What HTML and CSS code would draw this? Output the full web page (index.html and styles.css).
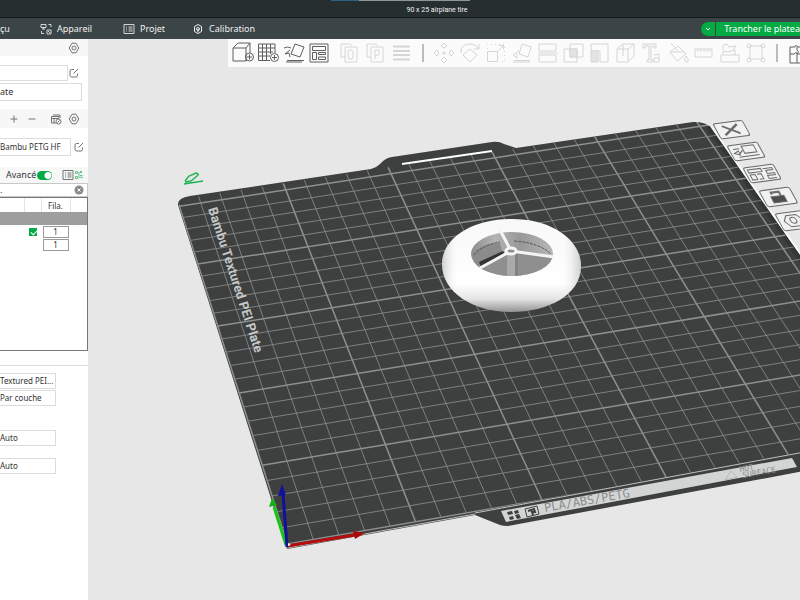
FILE: index.html
```html
<!DOCTYPE html>
<html lang="fr">
<head>
<meta charset="utf-8">
<title>90 x 25 airplane tire</title>
<link rel="stylesheet" href="styles.css">
</head>
<body>
<svg class="defs" aria-hidden="true">
  <symbol id="gear" viewBox="0 0 12 12"><path d="M4 1.200h4L10.800 6 8 10.800H4L1.200 6z"/><circle cx="6" cy="6" r="2"/></symbol>
  <symbol id="edit" viewBox="0 0 12 12"><path d="M6 2.500H3.500q-1.500 0-1.500 1.500v4.500q0 1.500 1.500 1.500h4.500q1.500 0 1.500-1.500V6.500M5.500 6.500 10 2"/></symbol>
</svg>
<header class="titlebar"><span class="strip"></span><h1>90 x 25 airplane tire</h1></header>
<nav class="tabs">
  <a class="tab first" href="#">çu</a>
  <a class="tab device" href="#"><svg width="12" height="12" viewBox="0 0 12 12"><path d="M1 1.500h5v3H1zM3.500 4.500V6M2 6h3M8.500 1.500H11V4M1.500 8v2.500H4M7 7h4v4H7zM8 8l2 2"/></svg>Appareil</a>
  <a class="tab project" href="#"><svg width="12" height="12" viewBox="0 0 12 12"><path d="M1 1.500h10v9H1zM3 4h1M5.500 4h4M3 6h1M5.500 6h4M3 8h1M5.500 8h4"/></svg>Projet</a>
  <a class="tab calib" href="#"><svg width="12" height="12" viewBox="0 0 12 12"><path d="M6 1.500 9.500 3.500v5L6 10.500 2.500 8.500v-5z"/><circle cx="6" cy="6" r="1.500"/><path d="M6 6v3"/></svg>Calibration</a>
  <div class="slice">
    <button class="more" aria-label="Options de tranchage"><svg width="8" height="8" viewBox="0 0 8 8"><path d="M2 3l2 2 2-2"/></svg></button>
    <button class="go">Trancher le platea</button>
  </div>
</nav>
<div class="work">
<aside class="side">
  <div class="head"><button aria-label="Paramètres imprimante"><svg width="12" height="12"><use href="#gear"/></svg></button></div>
  <div class="printer">
    <div class="line"><input class="field short" aria-label="Imprimante"><button aria-label="Modifier"><svg width="12" height="12"><use href="#edit"/></svg></button></div>
    <select class="field plate" aria-label="Plateau"><option>ate</option></select>
  </div>
  <div class="head filament">
    <button class="cut" aria-label="Purge"><svg width="4" height="12" viewBox="0 0 4 12"><path d="M0 3q2 3 0 6"/></svg></button>
    <button aria-label="Ajouter"><svg width="12" height="12" viewBox="0 0 12 12"><path d="M6 2.500v7M2.500 6h7"/></svg></button>
    <button aria-label="Retirer"><svg width="12" height="12" viewBox="0 0 12 12"><path d="M2.500 6h7"/></svg></button>
    <button class="sync" aria-label="Synchroniser"><svg width="12" height="12" viewBox="0 0 12 12"><path d="M6 10H1.500V3.500H9V5M1.500 5.500H9M3 2h7v3M4 5.500V10"/><circle cx="8.500" cy="8.500" r="2.500"/><path d="M7.500 9.500l2-2"/></svg></button>
    <button aria-label="Paramètres filament"><svg width="12" height="12"><use href="#gear"/></svg></button>
  </div>
  <div class="line spool"><select class="field" aria-label="Filament"><option>Bambu PETG HF</option></select><button aria-label="Modifier le filament"><svg width="12" height="12"><use href="#edit"/></svg></button></div>
  <div class="mode"><label for="adv">Avancé</label><input id="adv" class="toggle" type="checkbox" checked>
    <button class="list" aria-label="Liste"><svg width="12" height="12" viewBox="0 0 12 12"><path d="M1 1.500h10v9H1zM3 4h1M5.500 4h4M3 6h1M5.500 6h4M3 8h1M5.500 8h4"/></svg></button>
    <button class="tree" aria-label="Objets"><svg width="8" height="10" viewBox="0 0 8 10"><path d="M.5 1.500h2v2h-2zM5 1l2 2M7 1 5 3M.5 6.500h2v2h-2zM4 2v6.500M5 5.500h2.500M5 8l1.500-1.500 1 2"/></svg></button>
  </div>
  <div class="search"><input aria-label="Rechercher" value="."><button aria-label="Effacer"><svg width="10" height="10" viewBox="0 0 10 10"><circle cx="5" cy="5" r="4.500" fill="#8a8a8a" stroke="none"/><path d="M3.500 3.500l3 3M6.500 3.500l-3 3" stroke="#fff"/></svg></button></div>
  <div class="objects">
    <table>
      <thead><tr><th class="c1"></th><th class="c2"></th><th class="c3">Fila.</th><th></th></tr></thead>
      <tbody>
        <tr class="sel"><td colspan="4"></td></tr>
        <tr><td></td><td><input class="tick" type="checkbox" checked aria-label="Imprimable"></td><td><input class="num" value="1" aria-label="Filament objet"></td><td></td></tr>
        <tr><td></td><td></td><td><input class="num" value="1" aria-label="Filament pièce"></td><td></td></tr>
      </tbody>
    </table>
  </div>
  <div class="settings">
    <select class="field" aria-label="Type de plateau"><option>Textured PEI...</option></select>
    <select class="field" aria-label="Séquence"><option>Par couche</option></select>
    <select class="field gap" aria-label="Première couche"><option>Auto</option></select>
    <select class="field mid" aria-label="Autres couches"><option>Auto</option></select>
  </div>
</aside>
<main class="view">
  <svg class="scene" viewBox="88 39 712 561" preserveAspectRatio="xMinYMin slice" role="img" aria-label="Plateau">
    <defs>
      <linearGradient id="body" x1="0" y1="0" x2="0" y2="1"><stop offset="0" stop-color="#f8f8f8"/><stop offset=".7" stop-color="#fff"/><stop offset=".86" stop-color="#e4e4e4"/><stop offset="1" stop-color="#929292"/></linearGradient>
      <linearGradient id="side" x1="0" y1="0" x2="1" y2="0"><stop offset="0" stop-color="#777" stop-opacity=".35"/><stop offset=".12" stop-color="#fff" stop-opacity="0"/><stop offset=".85" stop-color="#fff" stop-opacity="0"/><stop offset="1" stop-color="#777" stop-opacity=".35"/></linearGradient>
      <linearGradient id="wall" x1="0" y1="0" x2="1" y2="0"><stop offset="0" stop-color="#8c8c8c"/><stop offset=".3" stop-color="#b4b4b4"/><stop offset=".6" stop-color="#989898"/><stop offset="1" stop-color="#b8b8b8"/></linearGradient>
      <clipPath id="hole"><ellipse cx="512" cy="254" rx="41" ry="22"/></clipPath>
      <clipPath id="sheet"><path d="M179 207 Q177 200 190 196L695 122Q707 121 712 130L900 400 800 452 287 547z"/></clipPath>
    </defs>
    <path fill="#3e4040" d="M287 549 178 205Q177 198 190 196L371 169Q376 168 380 164 385 158 392 157L492 142Q499 141 504 144L516 148 693 122Q706 121 712 129L810 269V470L508 526Q503 526 500 525L475 515z"/>
    <path d="M711 127 811 269" stroke="#fff" stroke-width="2"/>
    <path d="M708 127 810 273" stroke="#333636" stroke-width="4"/>
    <g id="grid" clip-path="url(#sheet)" stroke="#8e9090"></g>
    <path d="M402 164 492 151" stroke="#fff" stroke-width="2"/>
    <text class="brand" transform="translate(208 209) rotate(72)">Bambu Textured PEI Plate</text>
    <path d="M475 513 810 451M287 548 475 514" stroke="#bfc1c1" stroke-width="1" fill="none"/>
    <path d="M501 511 792 458 797 467 506 522Z" fill="#d3d5d5"/>
    <g fill="#3e4040"><path d="M507 512l5-1 1 3-5 1zM514 511l4-1 1 3-4 1zM509 517l4-1 1 3-4 1zM515 515l4-1 2 4-4 1z"/><path d="M525 509 537 506 539 514 527 517z" fill="none" stroke="#3e4040"/><path d="M528 511l6-2 1 3-3 0 1 3" fill="none" stroke="#3e4040" stroke-width="2"/></g>
    <text class="pla" transform="translate(545 512) rotate(-10)">PLA/ABS/PETG</text>
    <path d="M725 480 731 471 737 477z" fill="none" stroke="#b5b8b8"/>
    <text class="hot" transform="translate(740 472) rotate(-10)">HOT</text>
    <text class="hot" transform="translate(743 478) rotate(-10)">SURFACE</text>
    <g class="platebtn">
      <g transform="matrix(1 -.13 .55 1 713 124)"><rect width="29" height="15" rx="2"/><path d="M7 3 21 12M22 3 6 12" stroke-width="2"/></g>
      <g transform="matrix(1 -.13 .55 1 727 146)"><rect width="30" height="15" rx="2"/><path d="M13 2h12v7H13zM4 4h6M3 8l5-2v4zM8 9l4-3M6 12h20"/></g>
      <g transform="matrix(1 -.13 .55 1 743 168)"><rect width="30" height="15" rx="2"/><path d="M3 2.500h13v3H3zM3 7.500h5v5H3zM10 7.500h4v5h-4M18 3h9v2h-7v3h7v2h-8v3h8"/></g>
      <g transform="matrix(1 -.13 .55 1 759 191)"><rect width="30" height="16" rx="2"/><path d="M8 7h13v6H8z" fill="#4c4e4e"/><path d="M18 7V3h-8v2" stroke-width="2"/></g>
      <g transform="matrix(1 -.13 .55 1 775 214)"><rect width="30" height="17" rx="2"/><path d="M9 3h10l4 5-4 6H9L5 8z"/><circle cx="14" cy="8" r="3"/></g>
    </g>
    <path d="M185 181 189 176 196 173Q200 174 197 176L191 181 185 182M184 184 203 181" fill="none" stroke="#21b455" stroke-width="1.500"/>
    <g>
      <path fill="url(#body)" d="M442 264C442 238 472 219 512 219S581 240 581 266C581 295 548 312 511 312S442 293 442 264z"/>
      <path fill="url(#side)" d="M442 264C442 238 472 219 512 219S581 240 581 266C581 295 548 312 511 312S442 293 442 264z"/>
      <g clip-path="url(#hole)">
        <path fill="url(#wall)" d="M470 230h84v50h-84z"/>
        <path d="M472 254Q480 244 500 243L505 262 480 275z" fill="#8b8b8b"/>
        <path d="M479 262l24-11 2 3-24 13z" fill="#333"/>
        <path d="M480 269 511 252 554 258 548 280H480z" fill="#8f8f8f"/>
        <path d="M507 254h10v24h-10z" fill="#aaa"/><path d="M515 254h3v24h-3z" fill="#828282"/>
        <path d="M474 255Q482 245 500 242M514 241Q540 243 551 254" fill="none" stroke="#555" stroke-dasharray="3 1"/>
      </g>
      <path d="M511 251 500 230M511 251 554 257M511 251 480 268" stroke="#f4f4f4" stroke-width="3"/>
      <ellipse cx="511" cy="251" rx="5" ry="3" fill="#8f8f8f" stroke="#f6f6f6" stroke-width="3"/>
    </g>
    <g stroke-width="3"><path d="M287 546 355 535" stroke="#b50c0c"/><path d="M353 531 365 533 355 539z" fill="#a80c0c"/><path d="M286 545 274 507" stroke="#15c815"/><path d="M269 507 272 498 277 505z" fill="#15b015"/><path d="M287 547 283 494" stroke="#10109a"/><path d="M278 496 282 484 286 495z" fill="#10109a"/><path d="M288 543l3 2-3 1z" fill="#fff"/></g>
  </svg>
  <div class="tools">
    <button aria-label="Ajouter"><svg viewBox="0 0 26 28"><path d="M3 9h13v13H3zM3 9l5-5h12l-4 5M20 4v10M16 22l1-1"/><circle cx="19.500" cy="18" r="4"/><path d="M17 18h5M19.500 15.500v5"/></svg></button>
    <button aria-label="Ajouter un plateau"><svg viewBox="0 0 26 28"><path d="M14 21.500H2.500V5H19v9M2.500 9H19M2.500 13H17M2.500 17H14M6.500 5v16.500M10.500 5v16.500M14.500 5v10"/><circle cx="18.500" cy="18.500" r="4"/><path d="M16 18.500h5M18.500 16v5"/></svg></button>
    <button aria-label="Orienter"><svg viewBox="0 0 26 28"><path d="M9 15 13 5 22 8 18 18zM2 9q4-2 7 0M3 15l4-1 1 4M3 15l5-4M5 21.500h17M4 23h16"/></svg></button>
    <button aria-label="Organiser"><svg viewBox="0 0 26 28"><path d="M2 5h18v18H2zM4.500 7.500h13v4h-13zM4.500 13.500h4v7h-4zM10.500 13.500h7v2h-7zM10.500 18h7v2.500h-7z"/></svg></button>
    <span class="space"></span>
    <button class="off" aria-label="Objets"><svg viewBox="0 0 26 28"><path d="M8 18H4V5h9l2 2M8 8h12v15H8zM12 11h3l1 2v5l-1 2h-3l-1-2v-5z"/></svg></button>
    <button class="off" aria-label="Pièces"><svg viewBox="0 0 26 28"><path d="M8 18H4V5h9l2 2M8 8h12v15H8zM12 20v-9h4v5h-4"/></svg></button>
    <button class="off" aria-label="Hauteur de couche"><svg viewBox="0 0 26 28"><path d="M4 7.500h17M4 12h17M4 16h17M4 20.500h17" stroke-width="2"/></svg></button>
    <span class="bar"></span>
    <button class="off" aria-label="Déplacer"><svg viewBox="0 0 26 28"><path d="M13 4l3 3-3 2-3-2zM13 18l3 3-3 3-3-3zM3 14l3-3 2 3-2 3zM23 14l-3-3-2 3 2 3zM13 12v4M11 14h4"/></svg></button>
    <button class="off" aria-label="Pivoter"><svg viewBox="0 0 26 28"><path d="M13 10l7 6-7 7-7-7zM4 14Q3 5 13 5q6 0 8 4M17 10h5V5"/></svg></button>
    <button class="off" aria-label="Échelle"><svg viewBox="0 0 26 28"><path d="M4.500 12.500h10v10h-10zM14 13l6-6M16 6.500h4.500v4"/><path d="M4.500 10V5.500h17v17H16" stroke-dasharray="1 3"/></svg></button>
    <button class="off" aria-label="Poser"><svg viewBox="0 0 26 28"><path d="M10 15 13 5 22 8 19 18zM4 16l6-4M4 16l4 3v-4M5 21.500h16M4 23h17"/></svg></button>
    <button class="off" aria-label="Couper"><svg viewBox="0 0 26 28"><path d="M4 12V5h17v7zM4 16h17v7H4zM3 14h20"/></svg></button>
    <button class="off" aria-label="Booléen"><svg viewBox="0 0 26 28"><path d="M3 10h13v13H3zM9 5h13v13H9z"/><path class="shade" d="M9 10h7v8H9z"/></svg></button>
    <button class="off" aria-label="Supports"><svg viewBox="0 0 26 28"><path d="M4 5h17v18h-8V12H4z"/><path class="shade" d="M4 12h7v11H4z"/></svg></button>
    <button class="off" aria-label="Couture"><svg viewBox="0 0 26 28"><path d="M4 10h11v13H4zM4 10l6-5h11l-6 5M21 5v12l-6 6M10 5v12"/></svg></button>
    <button class="off" aria-label="Texte"><svg viewBox="0 0 26 28"><path d="M4 5h13v4h-2V7h-3v14h2v2H8v-2h2V7H6v2H4zM15 16l5-1v8h-5v-4h5"/></svg></button>
    <button class="off" aria-label="Peindre"><svg viewBox="0 0 26 28"><path d="M5 13 13 7l8 8-9 7zM6 4l7 8M5 13h14M21 17q4 5 1 6-4 0-1-6"/></svg></button>
    <button class="off" aria-label="Mesurer"><svg viewBox="0 0 26 28"><path d="M4 10h17v8H4zM7 10v3M10 10v3M13 10v3M16 10v3M19 10v3"/></svg></button>
    <button class="off" aria-label="Assembler"><svg viewBox="0 0 26 28"><path d="M4 16h18v7H4zM6 16v-4l5 1 7-2v5M6 11V6l4-1 2 3 7-1-3 4"/></svg></button>
    <button class="off" aria-label="Simplifier"><svg viewBox="0 0 26 28"><path d="M7 7h12v13H7z"/><circle cx="6" cy="7" r="2"/><circle cx="20" cy="7" r="2"/><circle cx="6" cy="21" r="2"/><circle cx="20" cy="21" r="2"/></svg></button>
    <span class="bar"></span>
    <button aria-label="Vue assemblage"><svg viewBox="0 0 26 28"><path d="M5 8h5q0-3 3 0h6v16H5zM5 15h4q3-3 3 0h8M12 8v3q3 2 0 4v9"/></svg></button>
  </div>
</main>
</div>
<script src="grid.js"></script>
</body>
</html>
```
FILE: styles.css
```css
* { box-sizing: border-box; }
body { margin: 0; height: 100vh; display: flex; flex-direction: column; overflow: hidden; font: 9px/12px "Noto Sans", sans-serif; color: #3a3d3e; }
button { border: 0; padding: 0; margin: 0; background: none; font: inherit; color: inherit; display: flex; align-items: center; justify-content: center; flex: none; }
input, select { font: inherit; color: inherit; margin: 0; outline: 0; }
svg { fill: none; stroke: currentColor; stroke-width: 1; display: block; flex: none; }
.defs { display: none; }
.titlebar { flex: none; height: 18px; background: #262e30; border-bottom: 1px solid #12191c; color: #f2f2f2; display: flex; flex-direction: column; align-items: center; }
.titlebar h1 { margin: 3px 0 0; padding-left: 74px; font: 7px/12px Roboto, sans-serif; }
.strip { width: 139px; height: 1px; flex: none; background: linear-gradient(90deg, #2e6284 20%, #8b9899 20%); }
.tabs { flex: none; height: 21px; background: #3b4446; color: #f0f0f0; display: flex; align-items: center; overflow: hidden; }
.tab { color: inherit; text-decoration: none; display: flex; align-items: center; gap: 5px; flex: none; }
.first { width: 40px; }
.device { width: 83px; }
.project { width: 69px; }
.project svg, .device svg { color: #d4d8d8; }
.slice { margin-left: auto; display: flex; height: 14px; color: #fff; flex: none; gap: 1px; }
.slice button { background: #04ab45; }
.slice .more { width: 14px; border-radius: 7px 0 0 7px; }
.slice .go { padding-left: 8px; }
.work { flex: 1; min-height: 0; display: flex; }
.side { flex: none; width: 11%; min-width: 88px; background: #fff; color: #333; overflow: hidden; }
.side svg { color: #707475; }
.head { height: 17px; background: #f7f7f7; display: flex; align-items: center; justify-content: flex-end; padding-right: 8px; }
.field { display: block; appearance: none; border: 1px solid #dcdcdc; border-left: 0; border-radius: 0; background: #fff; padding: 0; height: 16px; min-width: 0; }
.printer { padding: 9px 6px 8px 0; display: flex; flex-direction: column; gap: 2px; }
.line { display: flex; align-items: center; }
.line .short { width: 68px; }
.printer .plate { height: 18px; }
.filament { height: 19px; gap: 6px; }
.cut { margin-right: auto; }
.sync { margin-left: 6px; }
.spool { padding: 10px 0 11px; font-size: 8px; }
.spool .field { width: 71px; height: 18px; }
.spool button { margin-left: 2px; }
.mode { height: 16px; background: #f7f7f7; display: flex; align-items: center; padding-left: 6px; gap: 1px; }
.toggle { appearance: none; width: 15px; height: 9px; border-radius: 5px; background: radial-gradient(circle at 11px 50%, #fff 3px, #04ab45 4px); flex: none; }
.mode .list { margin-left: 9px; }
.mode .tree svg { color: #5fc48a; }
.search { height: 14px; border: 1px solid #c8c8c8; border-left: 0; display: flex; align-items: center; padding-right: 3px; }
.search input { flex: 1; min-width: 0; border: 0; padding: 0; background: none; height: 12px; }
.objects { height: 154px; border: 1px solid #777; border-left: 0; }
table { width: 100%; border-collapse: collapse; table-layout: fixed; }
th, td { padding: 0; height: 13px; line-height: 11px; }
th { height: 14px; font-weight: 400; font-size: 8px; border-right: 1px solid #e4e4e4; }
th:last-child { border: 0; }
.c1 { width: 24px; } .c2 { width: 17px; } .c3 { width: 29px; }
.sel { background: #9e9e9e; }
.num { display: block; width: 26px; height: 12px; margin: 0 auto; padding: 0; border: 1px solid #999; text-align: center; font-size: 8px; }
.tick { appearance: none; display: block; width: 8px; height: 8px; margin: 0 auto; background: #04ab45; }
.tick::after { content: ""; display: block; width: 5px; height: 3px; margin: 2px; border: solid #fff; border-width: 0 0 1px 1px; transform: rotate(-45deg); }
.settings { margin-top: 14px; border-top: 1px solid #ddd; padding-top: 7px; font-size: 8px; }
.settings .field { width: 56px; margin-bottom: 1px; }
.settings .gap { margin-top: 24px; }
.settings .mid { margin-top: 12px; }
.view { flex: 1; min-width: 0; position: relative; background: #e7e7e7; overflow: hidden; }
.scene { width: 100%; height: 100%; stroke: none; }
.brand { font: 700 13px Roboto, sans-serif; fill: #c6c8c8; }
.pla { font: 12px "DejaVu Sans Mono", monospace; fill: #8a8d8d; }
.hot { font: 8px "DejaVu Sans Mono", monospace; fill: #8a8d8d; }
.platebtn { fill: none; stroke: #6b6d6d; }
.platebtn rect { fill: #f1f1f1; }
.tools { position: absolute; top: 0; left: 140px; right: 0; height: 28px; padding-left: 2px; background: #fbfbfb; display: flex; align-items: center; overflow: hidden; color: #5c6061; }
.tools button { width: 26px; height: 28px; }
.tools svg { width: 26px; height: 28px; }
.tools .off { color: #d4d6d6; }
.shade { fill: #e2e3e3; }
.space { width: 3px; flex: none; }
.bar { width: 2px; height: 18px; margin: 0 7px; background: #bbb; flex: none; }
```
FILE: grid.js
```javascript
// Perspective grid of the build plate: 10 mm cells, heavier line every 50 mm.
// Camera samples: plate x, plate y (mm), view x, view y (px).
const samples = [
  [0, 0, 287, 547], [50, 0, 416, 523], [100, 0, 543, 499], [150, 0, 667, 477], [200, 0, 787, 455],
  [0, 150, 219, 326], [50, 150, 330, 308], [100, 150, 444, 289], [200, 150, 664, 255], [250, 150, 780, 237],
  [0, 200, 198, 263], [50, 200, 308, 247], [100, 200, 417, 228], [200, 200, 629, 197], [250, 200, 742, 181],
  [0, 250, 179, 207], [50, 250, 287, 190], [100, 250, 393, 173], [200, 250, 595, 138], [250, 250, 696, 130]
];
const MM = 250;
const PX = 500;

// Least-squares homography by normal equations and Gauss-Jordan elimination.
function fit(points) {
  const m = Array.from({ length: 8 }, () => new Array(9).fill(0));
  for (const [px, py, pu, pv] of points) {
    const x = px / MM, y = py / MM, u = pu / PX, v = pv / PX;
    for (const r of [[x, y, 1, 0, 0, 0, -u * x, -u * y, u], [0, 0, 0, x, y, 1, -v * x, -v * y, v]]) {
      for (let i = 0; i < 8; i++) for (let j = 0; j < 9; j++) m[i][j] += r[i] * r[j];
    }
  }
  for (let i = 0; i < 8; i++) {
    for (let r = 0; r < 8; r++) {
      if (r === i) continue;
      const f = m[r][i] / m[i][i];
      for (let c = i; c < 9; c++) m[r][c] -= f * m[i][c];
    }
  }
  return m.map((row, i) => row[8] / row[i]);
}
const h = fit(samples);

function project(px, py) {
  const x = px / MM, y = py / MM;
  const w = (h[6] * x + h[7] * y + 1) / PX;
  return [(h[0] * x + h[1] * y + h[2]) / w, (h[3] * x + h[4] * y + h[5]) / w];
}

const grid = document.getElementById("grid");
function rule(x1, y1, x2, y2, heavy) {
  const line = document.createElementNS("http://www.w3.org/2000/svg", "path");
  line.setAttribute("d", "M" + project(x1, y1).join(" ") + "L" + project(x2, y2).join(" "));
  line.setAttribute("stroke-width", heavy ? 1.5 : 0.8);
  grid.append(line);
}
for (let k = 0; k <= 250; k += 10) {
  rule(k, 0, k, 256, k % 50 === 0);
  rule(0, k, 256, k, k % 50 === 0);
}
```
